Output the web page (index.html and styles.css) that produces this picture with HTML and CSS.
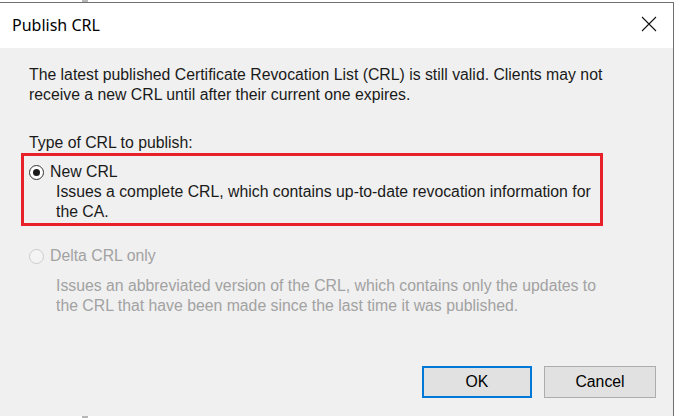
FILE: index.html
```html
<!DOCTYPE html>
<html>
<head>
<meta charset="utf-8">
<title>Publish CRL</title>
<link rel="stylesheet" href="styles.css">
</head>
<body>
<div class="strip top"><span class="mark"></span></div>
<div class="dialog">
  <div class="titlebar">
    <span class="title">Publish CRL</span>
    <span class="close" aria-label="Close">
      <svg width="16" height="16" viewBox="0 0 16 16"><path d="M1 1 L15 15 M15 1 L1 15" stroke="#111" stroke-width="1.1" fill="none"/></svg>
    </span>
  </div>
  <div class="content">
    <p class="intro">The latest published Certificate Revocation List (CRL) is still valid. Clients may not<br>receive a new CRL until after their current one expires.</p>
    <p class="label">Type of CRL to publish:</p>
    <div class="option highlight">
      <div class="opt-row"><span class="radio checked"></span><span>New CRL</span></div>
      <p class="desc">Issues a complete CRL, which contains up-to-date revocation information for<br>the CA.</p>
    </div>
    <div class="option disabled">
      <div class="opt-row"><span class="radio"></span><span>Delta CRL only</span></div>
      <p class="desc spaced">Issues an abbreviated version of the CRL, which contains only the updates to<br>the CRL that have been made since the last time it was published.</p>
    </div>
    <div class="buttons">
      <span class="btn default">OK</span>
      <span class="btn">Cancel</span>
    </div>
  </div>
</div>
<div class="strip bottom"><span class="mark"></span></div>
</body>
</html>
```
FILE: styles.css
```css
html, body {
  margin: 0;
  padding: 0;
  background: #ffffff;
  width: 675px;
  height: 418px;
  overflow: hidden;
}
.strip {
  height: 2px;
  display: flex;
}
.strip .mark {
  margin-left: 82px;
  width: 6px;
  height: 2px;
  background: #b8b8b8;
}
.dialog {
  width: 673px;
  height: 413px;
  border-top: 1px solid #6f6f6f;
  border-right: 1px solid #6f6f6f;
  background: #f0f0f0;
  display: flex;
  flex-direction: column;
}
.titlebar {
  height: 45px;
  background: #ffffff;
  display: flex;
  align-items: center;
  justify-content: space-between;
  padding: 0 16px 0 12px;
}
.title {
  font-family: "Noto Sans", "Open Sans", sans-serif;
  font-size: 16px;
  color: #000;
  margin-top: -2px;
}
.close {
  display: flex;
  width: 16px;
  height: 16px;
  margin-top: -3px;
}
.content {
  flex: 1;
  padding: 17px 17px 0 21px;
  font-family: "Liberation Sans", Arial, sans-serif;
  font-size: 15.8px;
  line-height: 20px;
  color: #1a1a1a;
}
p { margin: 0; }
.intro, .label { padding-left: 8px; }
.label { margin-top: 28px; }
.option {
  padding-left: 8px;
}
.highlight {
  box-sizing: border-box;
  width: 582px;
  border: 3px solid #e8202a;
  padding: 6px 0 1px 5px;
}
.opt-row {
  display: flex;
  align-items: center;
  gap: 6px;
  height: 20px;
}
.radio {
  width: 13px;
  height: 13px;
  border: 1px solid #333;
  border-radius: 50%;
  background: #fff;
  display: flex;
  align-items: center;
  justify-content: center;
}
.radio.checked::after {
  content: "";
  width: 7px;
  height: 7px;
  border-radius: 50%;
  background: #1a1a1a;
}
.desc { padding-left: 27px; }
.disabled { margin-top: 20px; color: #a2a2a2; }
.disabled .radio { border-color: #cccccc; background: #f4f4f4; }
.desc.spaced { margin-top: 10px; }
.buttons {
  margin-top: 50px;
  display: flex;
  justify-content: flex-end;
  gap: 12px;
}
.btn {
  width: 112px;
  height: 32px;
  box-sizing: border-box;
  border: 1px solid #adadad;
  background: #e1e1e1;
  display: flex;
  align-items: center;
  justify-content: center;
  color: #000;
}
.btn.default {
  width: 110px;
  border: 2px solid #0078d7;
}
```
